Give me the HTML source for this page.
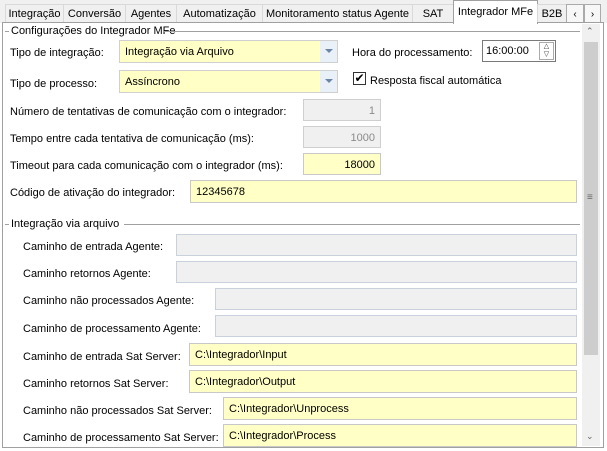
<!DOCTYPE html><html><head><style>
body{margin:0;width:607px;height:451px;background:#fff;font-family:"Liberation Sans",sans-serif;font-size:11px;color:#000;position:relative;overflow:hidden}
.a{position:absolute;white-space:nowrap;margin-top:3px}
.tab{position:absolute;top:4px;height:18px;border:1px solid #d9d9d9;border-bottom:none;background:#f0f0f0;line-height:19px;text-align:center;box-sizing:border-box;white-space:nowrap;overflow:hidden}
.in{position:absolute;box-sizing:border-box;border:1px solid #c8c8c8;background:#ffffc6;padding:1px 5px 0;line-height:21px;white-space:nowrap}
.ro{background:#f0f0f0;color:#8a8a8a;border-color:#cfcfcf;text-align:right}
.g{background:#f0f0f0;border-color:#c9d2dc}
.ln{position:absolute;height:1px;background:#a0a0a0}
.dd{position:absolute;right:4px;top:8px;width:0;height:0;border-left:4px solid transparent;border-right:4px solid transparent;border-top:4px solid #6b85a6}
</style></head><body>
<div style="position:absolute;left:0;top:0;width:607px;height:23px;background:#f0f0f0"></div>
<div style="position:absolute;left:2px;top:22px;width:602px;height:426px;border:1px solid #a0a0a0;box-sizing:border-box;background:#fff"></div>
<div class="tab" style="left:5px;width:59px">Integração</div>
<div class="tab" style="left:63px;width:63px">Conversão</div>
<div class="tab" style="left:125px;width:52px">Agentes</div>
<div class="tab" style="left:176px;width:87px">Automatização</div>
<div class="tab" style="left:262px;width:151px">Monitoramento status Agente</div>
<div class="tab" style="left:412px;width:42px">SAT</div>
<div class="tab" style="left:453px;top:0;height:24px;width:85px;background:#fff;border-color:#a0a0a0;line-height:22px">Integrador MFe</div>
<div class="tab" style="left:537px;width:30px">B2B</div>
<div class="tab" style="left:566px;width:18px;font-size:10px;border-color:#aaa;background:#f7f7f7">&lsaquo;</div>
<div class="tab" style="left:584px;width:17px;font-size:10px;border-color:#aaa;background:#f7f7f7">&rsaquo;</div>

<div class="ln" style="left:5px;top:31px;width:4px"></div>
<div class="a" style="left:11px;top:22px">Configurações do Integrador MFe</div>
<div class="ln" style="left:163px;top:31px;width:417px"></div>

<div class="a" style="left:10px;top:44px">Tipo de integração:</div>
<div class="in" style="left:119px;top:40px;width:219px;height:23px;border-color:#d0d0d0">Integração via Arquivo<div style="position:absolute;right:0;top:0;width:17px;height:21px;background:#eaf0f8"><div class="dd"></div></div></div>
<div class="a" style="left:352px;top:44px">Hora do processamento:</div>
<div class="in" style="left:482px;top:40px;width:74px;height:22px;background:#fff;border-color:#7a7a7a;padding:1px 3px 0;line-height:19px">16:00:00
<div style="position:absolute;right:1px;top:1px;width:15px;height:18px;border:1px solid #aaa;box-sizing:border-box;font-size:7px;line-height:8px;text-align:center;color:#333">&#9651;<br>&#9661;</div></div>

<div class="a" style="left:10px;top:75px">Tipo de processo:</div>
<div class="in" style="left:119px;top:70px;width:219px;height:23px;border-color:#d0d0d0">Assíncrono<div style="position:absolute;right:0;top:0;width:17px;height:21px;background:#eaf0f8"><div class="dd"></div></div></div>
<div style="position:absolute;left:353px;top:72px;width:13px;height:13px;border:1px solid #333;box-sizing:border-box;font-size:12px;line-height:11px;text-align:center">&#10004;</div>
<div class="a" style="left:370px;top:72px">Resposta fiscal automática</div>

<div class="a" style="left:10px;top:103px">Número de tentativas de comunicação com o integrador:</div>
<div class="in ro" style="left:303px;top:99px;width:78px;height:22px">1</div>
<div class="a" style="left:10px;top:130px">Tempo entre cada tentativa de comunicação (ms):</div>
<div class="in ro" style="left:303px;top:126px;width:78px;height:22px">1000</div>
<div class="a" style="left:10px;top:157px">Timeout para cada comunicação com o integrador (ms):</div>
<div class="in" style="left:303px;top:153px;width:78px;height:22px;text-align:right">18000</div>
<div class="a" style="left:10px;top:184px">Código de ativação do integrador:</div>
<div class="in" style="left:190px;top:180px;width:387px;height:23px">12345678</div>

<div class="ln" style="left:5px;top:224px;width:4px"></div>
<div class="a" style="left:11px;top:215px">Integração via arquivo</div>
<div class="ln" style="left:124px;top:224px;width:456px"></div>

<div class="a" style="left:23px;top:238px">Caminho de entrada Agente:</div>
<div class="in g" style="left:176px;top:234px;width:401px;height:22px"></div>
<div class="a" style="left:23px;top:265px">Caminho retornos Agente:</div>
<div class="in g" style="left:176px;top:261px;width:401px;height:22px"></div>
<div class="a" style="left:23px;top:292px">Caminho não processados Agente:</div>
<div class="in g" style="left:215px;top:288px;width:362px;height:22px"></div>
<div class="a" style="left:23px;top:320px">Caminho de processamento Agente:</div>
<div class="in g" style="left:215px;top:315px;width:362px;height:22px"></div>
<div class="a" style="left:23px;top:348px">Caminho de entrada Sat Server:</div>
<div class="in" style="left:189px;top:343px;width:388px;height:23px">C:\Integrador\Input</div>
<div class="a" style="left:23px;top:375px">Caminho retornos Sat Server:</div>
<div class="in" style="left:189px;top:370px;width:388px;height:23px">C:\Integrador\Output</div>
<div class="a" style="left:23px;top:402px">Caminho não processados Sat Server:</div>
<div class="in" style="left:223px;top:397px;width:354px;height:23px">C:\Integrador\Unprocess</div>
<div class="a" style="left:23px;top:429px">Caminho de processamento Sat Server:</div>
<div class="in" style="left:223px;top:424px;width:354px;height:23px">C:\Integrador\Process</div>

<div style="position:absolute;left:582px;top:24px;width:18px;height:422px;background:#f0f0f0"></div>
<div class="a" style="left:586px;top:23px;font-size:9px;color:#666">&#8963;</div>
<div style="position:absolute;left:584px;top:42px;width:14px;height:313px;background:#cdcdcd"></div>
<div class="a" style="left:587px;top:189px;font-size:10px;color:#666">&#8801;</div>
<div class="a" style="left:586px;top:428px;font-size:9px;color:#666">&#8964;</div>
</body></html>
